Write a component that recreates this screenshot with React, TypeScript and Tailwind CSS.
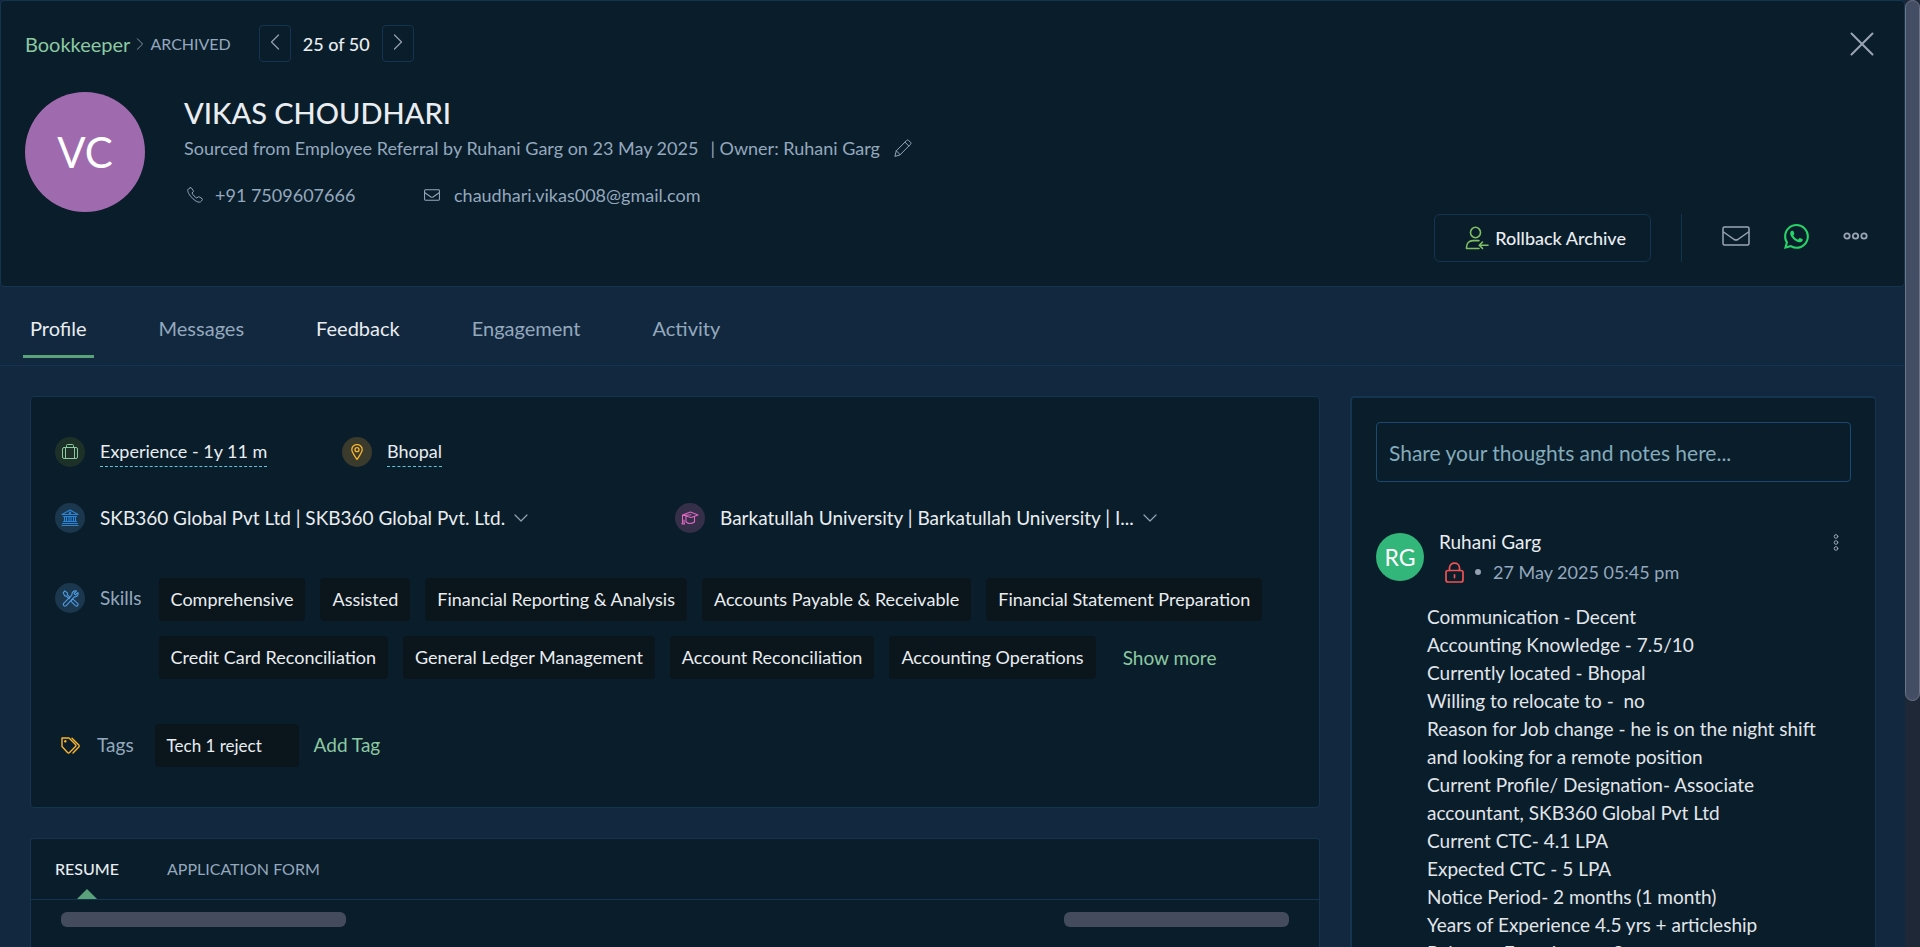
import React from "react";
import { BsWhatsapp } from "react-icons/bs";

type IconProps = { className?: string };

const Svg = ({
  box,
  className,
  width = 1,
  children,
}: {
  box: string;
  className?: string;
  width?: number;
  children: React.ReactNode;
}) => (
  <svg
    viewBox={box}
    className={className}
    fill="none"
    stroke="currentColor"
    strokeWidth={width}
    strokeLinecap="round"
    strokeLinejoin="round"
    aria-hidden="true"
  >
    {children}
  </svg>
);

const Chevron = ({ className, d }: IconProps & { d: string }) => (
  <Svg box="0 0 16 16" className={className} width={1.2}>
    <path d={d} />
  </Svg>
);
const LEFT = "M11.5 1 4.5 8l7 7";
const RIGHT = "M4.5 1l7 7-7 7";
const DOWN = "M2 5l6 6 6-6";

const PhoneIcon = ({ className }: IconProps) => (
  <Svg box="0 0 16 16" className={className}>
    <path d="M3.2.8 1.4 1.9C.2 2.8.6 5.6 3.6 9.2s6.3 6 8.7 6c.9 0 1.5-.4 2.2-1.3l.8-1.1c.3-.4.2-.9-.2-1.2L12 9.8c-.4-.3-.9-.2-1.2.2l-.9 1.1c-1.6-.6-4.3-3.5-4.9-5.2l1.1-.9c.4-.3.4-.8.2-1.2L4.5 1.1C4.2.6 3.7.5 3.2.8z" />
  </Svg>
);

const MailIcon = ({ className, width }: IconProps & { width?: number }) => (
  <Svg box="0 0 28 20" className={className} width={width}>
    <rect x="1" y="1" width="26" height="18" rx="1.5" />
    <path d="M1.5 6 12.2 13.5q1.8 1.1 3.6 0L26.5 6" />
  </Svg>
);

const PencilIcon = ({ className }: IconProps) => (
  <Svg box="0 0 18 18" className={className}>
    <path d="M1 17l1.3-5.2L12.6 1.5q1-1 2-.1l1.9 1.9q1 1 0 2L6.2 15.7zM11 3.2 14.8 7M2.3 11.8l3.9 3.9" />
  </Svg>
);

const CloseIcon = ({ className }: IconProps) => (
  <Svg box="0 0 24 24" className={className} width={2}>
    <path d="M1.5 1.5l21 21M22.5 1.5l-21 21" />
  </Svg>
);

const RollbackIcon = ({ className }: IconProps) => (
  <Svg box="0 0 24 24" className={className} width={1.6}>
    <ellipse cx="10.5" cy="6.5" rx="5" ry="5.2" />
    <path d="M14 14.6H8C4 14.6 1.5 17.5 1.5 21.5v1H14" />
    <path d="M23 19.2H14.5M17.5 16l-3.3 3.2 3.3 3.2" />
  </Svg>
);

const DotsIcon = ({ className }: IconProps) => (
  <Svg box="0 0 25 8" className={className} width={1.8}>
    <circle cx="4" cy="4" r="2.7" />
    <circle cx="12.5" cy="4" r="2.7" />
    <circle cx="21" cy="4" r="2.7" />
  </Svg>
);

const KebabIcon = ({ className }: IconProps) => (
  <Svg box="0 0 6 17" className={className}>
    <circle cx="3" cy="2.5" r="1.8" />
    <circle cx="3" cy="8.5" r="1.8" />
    <circle cx="3" cy="14.5" r="1.8" />
  </Svg>
);

const SuitcaseIcon = ({ className }: IconProps) => (
  <Svg box="0 0 16 16" className={className}>
    <rect x=".5" y="3.5" width="15" height="11" rx="1.5" />
    <path d="M3.5 3.5v11M12.5 3.5v11M4.5 3.5v-2q0-1 1-1h5q1 0 1 1v2" />
  </Svg>
);

const PinIcon = ({ className }: IconProps) => (
  <Svg box="0 0 16 16" className={className} width={1.3}>
    <path d="M8 15.4C5.5 11.5 2.8 8.5 2.8 5.6a5.2 5 0 0 1 10.4 0C13.2 8.5 10.5 11.5 8 15.4z" />
    <circle cx="8" cy="5.7" r="2" />
  </Svg>
);

const BankIcon = ({ className }: IconProps) => (
  <Svg box="0 0 18 18" className={className} width={1.1}>
    <path d="M1 5.5 9 1l8 4.500zM3.5 7.5v4.5M5.5 7.5v4.5M8 7.5v4.5M10 7.5v4.5M12.5 7.5v4.5M14.5 7.5v4.5M2.5 7.5h4M7 7.5h4M11.5 7.5h4M2.5 12.5h13M1.5 14.5h15M1 16.5h16" />
    <circle cx="9" cy="3.8" r=".8" />
  </Svg>
);

const CapIcon = ({ className }: IconProps) => (
  <Svg box="0 0 18 14" className={className} width={1.1}>
    <path d="M9.5 1 17 4 10 6.5 1.5 4zM5 5.5V11q4 3 8.5 0V5.5M1.5 4v7.5l-.5 1.5h2.5l-.5-1.5V9M10 3.8 2.5 4.5" />
  </Svg>
);

const ToolsIcon = ({ className }: IconProps) => (
  <Svg box="0 0 18 18" className={className} width={1.2}>
    <path d="M1.3 2.8 3 1l2.7 2v2l2.8 2.8L7.3 9.2 4.3 6.2h-1.5zM10.3 10.8l1.2-1.1 5 4.5q1 1.2 0 2.3t-2.3 0l-4.6-4.5z" />
    <path d="M15.3 1.2 12.8 3.7l1.5 1.5 2.5-2.5c1 2.3-.8 5-3.8 4.5L4.5 16.5q-1.2 1-2.5 0-1.2-1.2 0-2.5l8.5-8.5C10 2.5 12.7.3 15.3 1.2z" />
  </Svg>
);

const TagsIcon = ({ className }: IconProps) => (
  <Svg box="0 0 20 17" className={className} width={1.4}>
    <path d="M1 1h7l6.5 6.5q1 1 0 2L8.5 15.5q-1 1-2 0L1 9.5zM11 1.2l6.8 6.8q1 1 0 2L12 16" />
    <circle cx="4.3" cy="4.3" r=".6" />
  </Svg>
);

const LockIcon = ({ className }: IconProps) => (
  <Svg box="0 0 19 21" className={className} width={1.7}>
    <rect x="1" y="8.5" width="17" height="11.5" rx="2" />
    <path d="M4.5 8.5V6c0-6.5 10-6.5 10 0v2.5M9.5 12.8v2.8" />
  </Svg>
);

const tabs = [
  { label: "Profile", active: true, bright: true },
  { label: "Messages" },
  { label: "Feedback", bright: true },
  { label: "Engagement" },
  { label: "Activity" },
];

const skills = [
  "Comprehensive",
  "Assisted",
  "Financial Reporting & Analysis",
  "Accounts Payable & Receivable",
  "Financial Statement Preparation",
  "Credit Card Reconciliation",
  "General Ledger Management",
  "Account Reconciliation",
  "Accounting Operations",
];

const note = [
  "Communication - Decent",
  "Accounting Knowledge - 7.5/10",
  "Currently located - Bhopal",
  "Willing to relocate to -  no",
  "Reason for Job change - he is on the night shift and looking for a remote position",
  "Current Profile/ Designation- Associate accountant, SKB360 Global Pvt Ltd",
  "Current CTC- 4.1 LPA",
  "Expected CTC - 5 LPA",
  "Notice Period- 2 months (1 month)",
  "Years of Experience 4.5 yrs + articleship",
  "Relevant Experience - 3",
];

const Badge = ({ className, children }: { className: string; children: React.ReactNode }) => (
  <span className={`flex size-[30px] shrink-0 items-center justify-center rounded-full ${className}`}>
    {children}
  </span>
);

const Header = () => (
  <header className="flex flex-col rounded border border-[#14344f] bg-[#0a1d2b] px-6 pt-6 pb-6">
    <div className="flex items-center justify-between">
      <div className="flex items-center">
        <nav aria-label="Breadcrumb" className="flex items-center gap-1">
          <a href="#bookkeeper" className="text-xl leading-9 text-[#8cc9a1]">Bookkeeper</a>
          <Chevron d={RIGHT} className="size-3 text-[#93a1b3]" />
          <span className="text-base">ARCHIVED</span>
        </nav>
        <div className="ml-7 flex items-center gap-3">
          <button type="button" aria-label="Previous candidate" className="flex h-[37px] w-8 items-center justify-center rounded border border-[#14344f] pb-1">
            <Chevron d={LEFT} className="size-4 text-[#93a1b3]" />
          </button>
          <span className="text-lg font-medium text-[#e9edf0]">25 of 50</span>
          <button type="button" aria-label="Next candidate" className="flex h-[37px] w-8 items-center justify-center rounded border border-[#14344f] pb-1">
            <Chevron d={RIGHT} className="size-4 text-[#93a1b3]" />
          </button>
        </div>
      </div>
      <button type="button" aria-label="Close" className="mr-1.5">
        <CloseIcon className="size-6 text-[#9aa5b4]" />
      </button>
    </div>

    <div className="mt-[30px] flex gap-[39px]">
      <div className="flex size-[120px] shrink-0 items-center justify-center rounded-full bg-[#9f6bae] text-[42px] text-white">
        VC
      </div>
      <div>
        <h1 className="mt-[3px] text-[29px] leading-9 font-medium text-[#e9edf0]">VIKAS CHOUDHARI</h1>
        <div className="mt-[3px] flex items-center text-lg leading-7">
          <span>Sourced from Employee Referral by Ruhani Garg on 23 May 2025</span>
          <span className="ml-3">| Owner: Ruhani Garg</span>
          <button type="button" aria-label="Edit owner" className="ml-3.5">
            <PencilIcon className="size-[18px]" />
          </button>
        </div>
        <div className="mt-[19px] flex items-center text-lg leading-7">
          <span className="flex w-60 items-center gap-3 pl-[3px]">
            <PhoneIcon className="size-4" />
            +91 7509607666
          </span>
          <span className="flex items-center gap-3.5">
            <MailIcon className="h-3 w-4" width={1.8} />
            chaudhari.vikas008@gmail.com
          </span>
        </div>
      </div>
    </div>

    <div className="mt-0.5 flex items-center justify-end pr-3">
      <button type="button" className="flex h-12 items-center gap-1.5 rounded-md border border-[#14344f] pr-6 pl-[30px] text-lg font-medium text-[#e9edf0]">
        <RollbackIcon className="size-6 text-[#7fbf62]" />
        Rollback Archive
      </button>
      <span className="ml-[30px] h-12 w-px bg-[#14344f]" />
      <div className="flex items-center gap-[34px] pb-1 pl-10">
        <button type="button" aria-label="Send email">
          <MailIcon className="h-5 w-7 text-[#9aa5b4]" width={1.5} />
        </button>
        <button type="button" aria-label="WhatsApp">
          <BsWhatsapp className="size-[25px] text-[#25d366]" />
        </button>
        <button type="button" aria-label="More actions">
          <DotsIcon className="h-2 w-[25px] text-[#9aa5b4]" />
        </button>
      </div>
    </div>
  </header>
);

const ProfileCard = () => (
  <section className="h-[412px] rounded border border-[#14344f] bg-[#0a1d2b] px-6 pt-10 text-[19px] text-[#e9edf0]">
    <div className="flex text-lg">
      <div className="flex w-[287px] items-start gap-[15px]">
        <Badge className="bg-[#1d3129]"><SuitcaseIcon className="size-4 text-[#8cc9a1]" /></Badge>
        <button type="button" className="border-b border-dashed border-[#5bc4d6] leading-[29px]">Experience - 1y 11 m</button>
      </div>
      <div className="flex items-start gap-[15px]">
        <Badge className="bg-[#3a3a2d]"><PinIcon className="size-4 text-[#fbb62b]" /></Badge>
        <button type="button" className="border-b border-dashed border-[#5bc4d6] leading-[29px]">Bhopal</button>
      </div>
    </div>

    <div className="mt-9 flex">
      <div className="flex w-[620px] items-center gap-[15px]">
        <Badge className="bg-[#1b374e]"><BankIcon className="size-[18px] text-[#2b85d8]" /></Badge>
        <button type="button" className="flex items-center gap-2">
          SKB360 Global Pvt Ltd | SKB360 Global Pvt. Ltd.
          <Chevron d={DOWN} className="size-4 text-[#93a1b3]" />
        </button>
      </div>
      <div className="flex min-w-0 items-center gap-[15px]">
        <Badge className="bg-[#352f49]"><CapIcon className="h-3.5 w-[18px] text-[#dc68c0]" /></Badge>
        <button type="button" className="flex items-center gap-2">
          Barkatullah University | Barkatullah University | I...
          <Chevron d={DOWN} className="size-4 text-[#93a1b3]" />
        </button>
      </div>
    </div>

    <div className="mt-[45px] flex items-start">
      <Badge className="mt-[5px] bg-[#1b374e]"><ToolsIcon className="size-[17px] text-[#4e9be0]" /></Badge>
      <span className="mt-[5px] ml-[15px] leading-[30px] text-[#94a8bd]">Skills</span>
      <ul className="ml-[17px] flex flex-1 flex-wrap gap-[15px] text-lg leading-[43px]">
        {skills.map((s) => (
          <li key={s} className="rounded bg-[#0b151c] px-3">{s}</li>
        ))}
        <li className="ml-3 text-[19px] leading-[43px] text-[#8cc9a1]">
          <button type="button">Show more</button>
        </li>
      </ul>
    </div>

    <div className="mt-[45px] flex items-center">
      <TagsIcon className="ml-1.5 h-[17px] w-5 text-[#fbb62b]" />
      <span className="ml-4 text-[#94a8bd]">Tags</span>
      <span className="ml-[21px] w-36 rounded bg-[#0b151c] px-3 text-[17px] leading-[43px]">Tech 1 reject</span>
      <button type="button" className="ml-[15px] text-[#8cc9a1]">Add Tag</button>
    </div>
  </section>
);

const ResumeCard = () => (
  <section className="flex-1 rounded-t border border-b-0 border-[#14344f] bg-[#0a1d2b]">
    <div role="tablist" className="flex h-[61px] items-stretch gap-12 border-b border-[#14344f] px-6 text-base">
      <button type="button" role="tab" aria-selected="true" className="relative font-medium text-[#e9edf0]">
        RESUME
        <svg viewBox="0 0 20 10" className="absolute bottom-0 left-1/2 h-2.5 w-5 -translate-x-1/2 fill-[#5aa27a]" aria-hidden="true">
          <path d="M0 10 10 0l10 10z" />
        </svg>
      </button>
      <button type="button" role="tab" aria-selected="false">APPLICATION FORM</button>
    </div>
    <div className="flex justify-between px-[30px] pt-3">
      <div className="h-[15px] w-[285px] rounded-md bg-[#434b5c]" />
      <div className="h-[15px] w-[225px] rounded-md bg-[#434b5c]" />
    </div>
  </section>
);

const NotesPanel = () => (
  <aside className="w-[526px] shrink-0 rounded-t border-2 border-r border-b-0 border-[#14344f] bg-[#0a1d2b] px-6 pt-6">
    <input
      type="text"
      aria-label="Notes"
      placeholder="Share your thoughts and notes here..."
      className="h-[60px] w-full rounded border border-[#1a4a70] bg-transparent px-3 text-[21px] text-[#e9edf0] outline-none placeholder:text-[#84abba]"
    />
    <article className="mt-[45px]">
      <div className="flex items-start">
        <span className="mt-1.5 flex size-12 shrink-0 items-center justify-center rounded-full bg-[#33b679] text-[23px] text-white">RG</span>
        <div className="ml-[15px] flex-1">
          <h2 className="text-[19px] leading-[30px] text-[#e9edf0]">Ruhani Garg</h2>
          <div className="flex items-center pl-1.5 text-lg leading-[30px]">
            <LockIcon className="h-[21px] w-[19px] text-[#f05252]" />
            <span className="ml-[11px] size-1.5 rounded-full bg-[#94a1b3]" />
            <time className="ml-3">27 May 2025 05:45 pm</time>
          </div>
        </div>
        <button type="button" aria-label="Note actions" className="mt-[7px] mr-3">
          <KebabIcon className="h-[17px] w-1.5 text-[#9aa5b4]" />
        </button>
      </div>
      <div className="mt-4 mr-3 ml-[51px] text-[19px] leading-7 whitespace-pre-wrap text-[#e1e6ea]">
        {note.map((line) => (
          <p key={line}>{line}</p>
        ))}
      </div>
    </article>
  </aside>
);

export default function App() {
  return (
    <div className="flex h-screen overflow-hidden bg-[#12283f] font-['Lato','Open_Sans',sans-serif] text-[#94a8bd]">
      <div className="flex min-w-0 flex-1 flex-col overflow-hidden">
        <div className="shrink-0"><Header /></div>
        <nav role="tablist" aria-label="Candidate" className="flex h-[79px] shrink-0 items-start gap-[58px] border-b border-[#14344f] px-[23px] pt-5 text-xl">
          {tabs.map((t) => (
            <button
              key={t.label}
              type="button"
              role="tab"
              aria-selected={Boolean(t.active)}
              className={`h-[51px] border-b-3 px-[7px] pb-[7px] ${t.active ? "border-[#5aa27a]" : "border-transparent"} ${t.bright ? "text-[#e9edf0]" : ""}`}
            >
              {t.label}
            </button>
          ))}
        </nav>
        <main className="flex min-h-0 flex-1 gap-[30px] pt-[30px] pr-[29px] pl-[30px]">
          <div className="flex min-w-0 flex-1 flex-col gap-[30px]">
            <ProfileCard />
            <ResumeCard />
          </div>
          <NotesPanel />
        </main>
      </div>
      <div className="w-[15px] shrink-0 bg-[#1e2836]" aria-hidden="true">
        <div className="h-[74%] rounded-full border border-[#6d7586] bg-[#434d63]" />
      </div>
    </div>
  );
}
